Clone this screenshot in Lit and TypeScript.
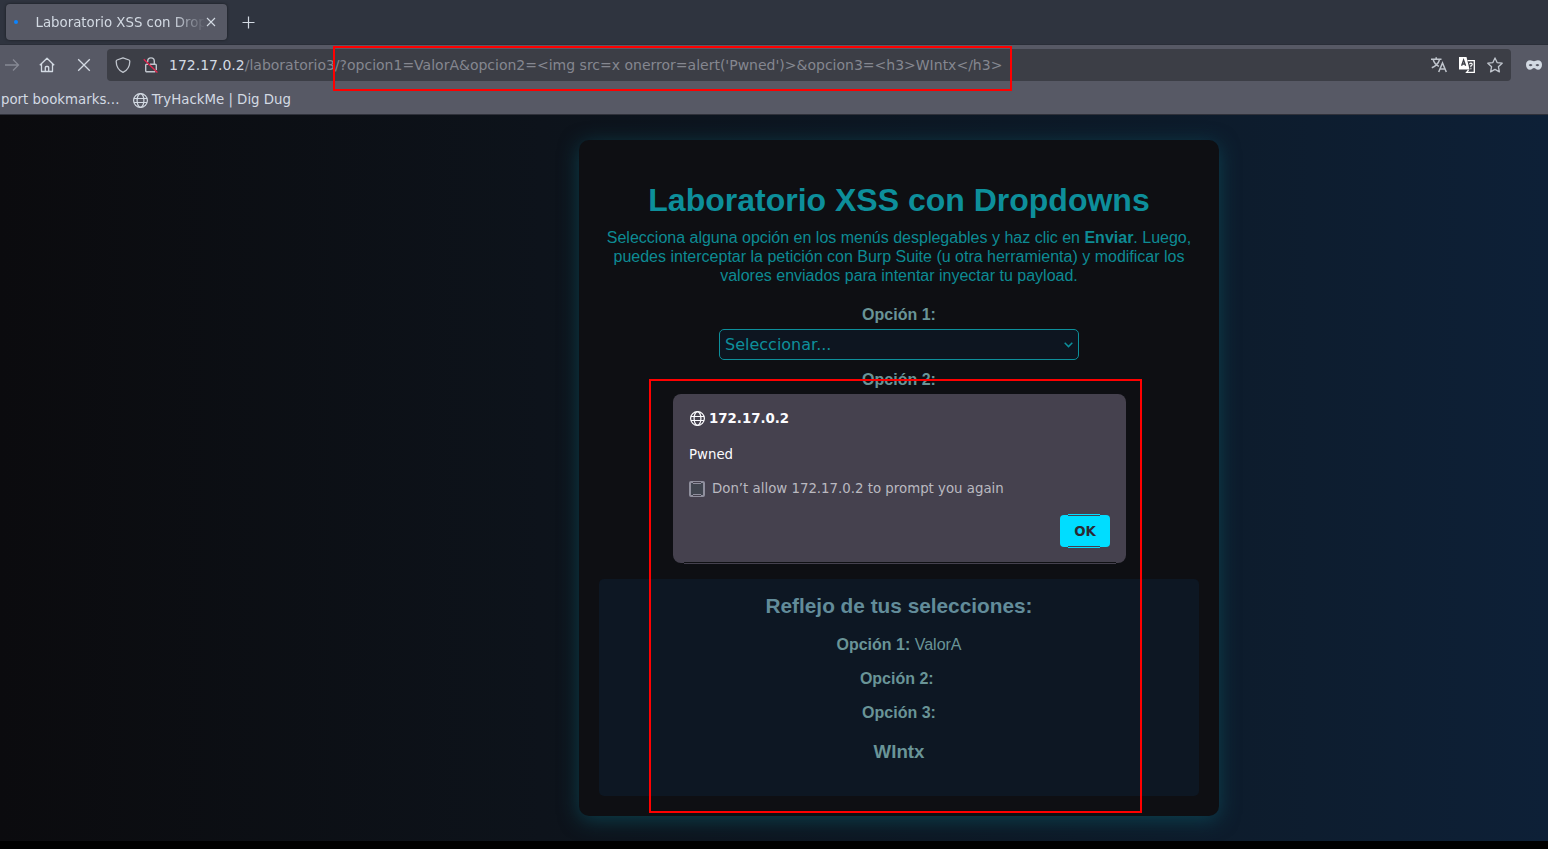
import { LitElement, html, css } from "lit";
import { customElement } from "lit/decorators.js";

const globe = html`<svg class="globe" width="16" height="16" viewBox="0 0 16 16" fill="none" stroke="currentColor" stroke-width="1.2">
  <circle cx="8.500" cy="7.500" r="6.900"></circle>
  <ellipse cx="8.500" cy="7.500" rx="3.4" ry="6.900"></ellipse>
  <path d="M2 5.500h13M2 9.500h13"></path>
</svg>`;

@customElement("browser-chrome")
class BrowserChrome extends LitElement {
  static styles = css`
    :host { display: block; font: 13.33px/18px "DejaVu Sans", sans-serif; color: #d3dae3; }
    svg { display: block; flex: none; }
    .tabs { height: 45px; box-sizing: border-box; padding: 4px 0 0 6px; background: #2f343f; border-bottom: 1px solid #2a2e38; display: flex; }
    .tab { width: 221px; height: 36px; box-sizing: border-box; border-radius: 4px; background: #575965; box-shadow: 0 0 3px rgba(0, 0, 0, 0.5); display: flex; align-items: center; padding: 0 10px 0 8px; }
    .dot { width: 4px; height: 4px; border-radius: 50%; background: #0a84ff; margin-right: 17.5px; flex: none; }
    .title { width: 168px; padding-top: 2px; overflow: hidden; white-space: nowrap; -webkit-mask-image: linear-gradient(90deg, #000 136px, transparent 170px); mask-image: linear-gradient(90deg, #000 136px, transparent 170px); }
    .close { margin-left: 2px; }
    .plus { margin: 12px 0 0 15px; }
    .nav { height: 40px; background: #575965; display: flex; align-items: center; }
    .forward { margin-left: 4px; color: #868994; }
    .home { margin-left: 19px; }
    .stop { margin-left: 21px; }
    .url { margin-left: 15px; width: 1404px; height: 32px; box-sizing: border-box; border-radius: 4px; background: #3c3e46; display: flex; align-items: center; padding: 0 8px; }
    .lock { margin-left: 12px; }
    .address { flex: 1; margin-left: 10px; white-space: pre; color: #858790; font-size: 14px; padding-bottom: 1px; }
    .host { color: #d3dae3; }
    .tools { display: flex; gap: 12px; color: #c0c5cd; }
    .mask { margin-left: 15px; }
    .bookmarks { height: 30px; box-sizing: border-box; background: #575965; border-bottom: 1px solid #2f313a; display: flex; align-items: center; padding-left: 1px; }
    .bookmarks .globe { margin: 2px 4px 0 12px; }
  `;
  render() {
    return html`
      <div class="tabs">
        <div class="tab">
          <span class="dot"></span><span class="title">Laboratorio XSS con Dropdowns</span>
          <svg class="close" width="10" height="10" viewBox="0 0 10 10" stroke="currentColor" stroke-width="1.1"><path d="M1 1l8 8M9 1l-8 8"></path></svg>
        </div>
        <svg class="plus" width="14" height="14" viewBox="0 0 14 14" stroke="currentColor" stroke-width="1.2"><path d="M6.500 .5v12M.5 6.500h12"></path></svg>
      </div>
      <div class="nav">
        <svg class="forward" width="16" height="16" viewBox="0 0 16 16" fill="none" stroke="currentColor" stroke-width="1.3"><path d="M1 8h13.5M9 2.5L14.5 8 9 13.5"></path></svg>
        <svg class="home" width="16" height="16" viewBox="0 0 16 16" fill="none" stroke="currentColor" stroke-width="1.3" stroke-linejoin="round"><path d="M.8 8.3L8 1.2l7.2 7.1M2.5 7v7.5h11V7M6.3 14.5v-4a1 1 0 0 1 1-1h1.4a1 1 0 0 1 1 1v4"></path></svg>
        <svg class="stop" width="16" height="16" viewBox="0 0 16 16" stroke="currentColor" stroke-width="1.3"><path d="M2.2 2.2l11.6 11.6M13.8 2.2L2.2 13.8"></path></svg>
        <div class="url">
          <svg width="16" height="16" viewBox="0 0 16 16" fill="none" stroke="#c0c5cd" stroke-width="1.3" stroke-linejoin="round"><path d="M8 .8l6 2.2q.8.3.8 1.2c0 5-2.300 9-6.800 11.200C3.500 13.200 1.200 9.200 1.200 4.200Q1.200 3.300 2 3z"></path></svg>
          <svg class="lock" width="16" height="16" viewBox="0 0 16 16" fill="none" stroke="#c0c5cd" stroke-width="1.4"><path d="M4.700 5V4.200a3.300 3.300 0 0 1 6.600 0V7.300M7 7.300h5.300a1 1 0 0 1 1 1V13M12.300 14.800H3.700a1 1 0 0 1-1-1V8.300a1 1 0 0 1 1-1H5"></path><path d="M.8 2.200l13.600 13.200" stroke="#e22850" stroke-width="1.400"></path></svg>
          <span class="address"><span class="host">172.17.0.2</span>${"/laboratorio3/?opcion1=ValorA&opcion2=<img src=x onerror=alert('Pwned')>&opcion3=<h3>WIntx</h3>"}</span>
          <div class="tools">
            <svg width="16" height="16" viewBox="0 0 16 16" fill="none" stroke="currentColor" stroke-width="1.500"><path d="M0 2.300h10.500M5.200.3v2M2.300 3c.9 3 3.300 5.200 5.600 6.400M8.400 3C7.400 6.400 4 9.400.8 10.700M7.700 15l3.800-9 3.800 9M9 12h5"></path></svg>
            <svg width="16" height="16" viewBox="0 0 16 16"><path fill="#fff" d="M0 0h7.500l3 12.500H0z"></path><path d="M2.600 8.800L4.600 3l2 5.800M3.200 7h2.800" fill="none" stroke="#3c3e46" stroke-width="1.300"></path><path d="M8.500 3.700h6.800v11.600H7.600l2-2.500" fill="none" stroke="#fff" stroke-width="1.300"></path><path d="M10.600 7.200q0-1 1.300-1t1.300 1.200q0 .8-1.300 1.400v1.400m0 1v1" fill="none" stroke="#fff" stroke-width="1.200"></path></svg>
            <svg width="16" height="16" viewBox="0 0 16 16" fill="none" stroke="currentColor" stroke-width="1.300" stroke-linejoin="round"><path d="M8 .9l2.100 4.700 5.100.6-3.800 3.500 1 5.200L8 12.400l-4.400 2.500 1-5.200L.8 6.200l5.100-.6z"></path></svg>
          </div>
        </div>
        <svg class="mask" width="16" height="10" viewBox="0 0 16 10"><path fill="currentColor" fill-rule="evenodd" d="M4.200.2C5.900.2 6.600 1.200 8 1.200S10.100.2 11.800.2C14.400.2 16 1.800 16 4.700S14.400 9.700 12 9.700C10 9.700 9.200 8 8 8S6 9.700 4 9.700C1.600 9.700 0 7.600 0 4.700S1.600.2 4.200.2zM2.700 5Q4.600 7.400 6.500 5 4.600 2.800 2.700 5zM9.500 5q1.900 2.400 3.800 0-1.900-2.200-3.800 0z"></path></svg>
      </div>
      <div class="bookmarks"><span>port bookmarks…</span>${globe}<span>TryHackMe | Dig Dug</span></div>
    `;
  }
}

@customElement("alert-dialog")
class AlertDialog extends LitElement {
  static styles = css`
    :host { display: block; box-sizing: border-box; width: 453px; height: 169px; padding: 16px; border-radius: 8px; background: #45414e; font: 13.33px/17px "DejaVu Sans", sans-serif; color: #fbfbfe; }
    .origin { display: flex; align-items: center; gap: 4px; font-weight: bold; height: 17px; }
    .globe { display: block; }
    .message { margin-top: 19px; }
    .check { margin-top: 17px; display: flex; align-items: center; height: 17px; gap: 7px; color: #bab9c0; }
    .box { width: 16px; height: 16px; box-sizing: border-box; border: 2px solid #8f8f9d; border-radius: 2px; background: #40454f; display: flex; flex-direction: column; justify-content: space-between; align-items: center; }
    .box::before, .box::after { content: ""; width: 8px; height: 1px; background: #8f8f9d; box-shadow: 0 -1px #45414e; }
    .box::after { box-shadow: 0 1px #45414e; }
    .actions { display: flex; justify-content: flex-end; margin-top: 18px; }
    .ok { width: 50px; height: 32px; line-height: 33px; border-radius: 4px; background: #00ddff; color: #2b2a33; text-align: center; font-weight: bold; position: relative; }
    .ok::before, .ok::after { content: ""; position: absolute; left: 8px; right: 10px; height: 1px; background: #00ddff; }
    .ok::before { top: -1px; box-shadow: 0 1px #45414e; }
    .ok::after { bottom: -1px; box-shadow: 0 -1px #45414e; }
    .edge { position: absolute; left: 11px; right: 10px; bottom: -1px; height: 1px; background: #45414e; box-shadow: 0 -1px #101114; }
  `;
  render() {
    return html`
      <div class="origin">${globe}<span>172.17.0.2</span></div>
      <div class="message">Pwned</div>
      <div class="check"><span class="box"></span><span>Don’t allow 172.17.0.2 to prompt you again</span></div>
      <div class="actions"><div class="ok">OK</div></div>
      <div class="edge"></div>
    `;
  }
}

@customElement("app-root")
class AppRoot extends LitElement {
  static styles = css`
    :host { display: block; position: relative; width: 1548px; height: 849px; overflow: hidden; background: #000; }
    .page { height: 726px; box-sizing: border-box; padding: 25px 0 0 579px; background: linear-gradient(90deg, #0b0b0e 0%, #0d131b 35%, #0d1b2a 75%, #0d2037 100%); font: 16px/19px "Liberation Sans", Arial, sans-serif; color: #699497; overflow: hidden; }
    .card { width: 640px; height: 676px; box-sizing: border-box; padding: 20px; border-radius: 10px; background: #0e0f13; box-shadow: 0 4px 20px rgba(13, 85, 98, 0.65); text-align: center; }
    h1 { margin: 22px 0 9px; font-size: 32px; line-height: 37px; color: #0d8f9b; }
    p { margin: 0; }
    .intro { color: #0d8b93; }
    .label { margin-top: 20px; font-weight: bold; }
    .select { width: 360px; height: 31px; box-sizing: border-box; margin: 5px auto 0; border: 1px solid #0d8f9b; border-radius: 5px; background: #0d1520; color: #0d8f9b; display: flex; align-items: center; justify-content: space-between; padding: 0 5px; font-family: "DejaVu Sans", sans-serif; }
    .label.second { margin-top: 10px; }
    .result { margin-top: 190px; height: 217px; box-sizing: border-box; border-radius: 5px; background: #0d1723; padding-top: 15px; }
    h2 { margin: 0 0 17px; font-size: 20.8px; line-height: 24px; color: #628c9a; }
    .result p { margin-bottom: 15px; }
    h3 { margin: 0; padding-top: 4px; font-size: 18.72px; line-height: 22px; }
    .dialog { position: absolute; left: 673px; top: 394px; }
    .mark { position: absolute; border: 2px solid #f00; box-sizing: border-box; }
    .mark-url { left: 333px; top: 46px; width: 679px; height: 45px; }
    .mark-dialog { left: 649px; top: 379px; width: 493px; height: 434px; }
  `;
  render() {
    return html`
      <browser-chrome></browser-chrome>
      <div class="page">
        <div class="card">
          <h1>Laboratorio XSS con Dropdowns</h1>
          <p class="intro">Selecciona alguna opción en los menús desplegables y haz clic en <b>Enviar</b>. Luego,<br>puedes interceptar la petición con Burp Suite (u otra herramienta) y modificar los<br>valores enviados para intentar inyectar tu payload.</p>
          <div class="label">Opción 1:</div>
          <div class="select"><span>Seleccionar...</span><svg width="9" height="6" viewBox="0 0 9 6" fill="none" stroke="currentColor" stroke-width="1.500"><path d="M.7.8l3.800 3.800L8.300.8"></path></svg></div>
          <div class="label second">Opción 2:</div>
          <div class="result">
            <h2>Reflejo de tus selecciones:</h2>
            <p><b>Opción 1:</b> ValorA</p>
            <p><b>Opción 2:</b>&nbsp;</p>
            <p><b>Opción 3:</b></p>
            <h3>WIntx</h3>
          </div>
        </div>
      </div>
      <alert-dialog class="dialog"></alert-dialog>
      <div class="mark mark-url"></div>
      <div class="mark mark-dialog"></div>
    `;
  }
}
